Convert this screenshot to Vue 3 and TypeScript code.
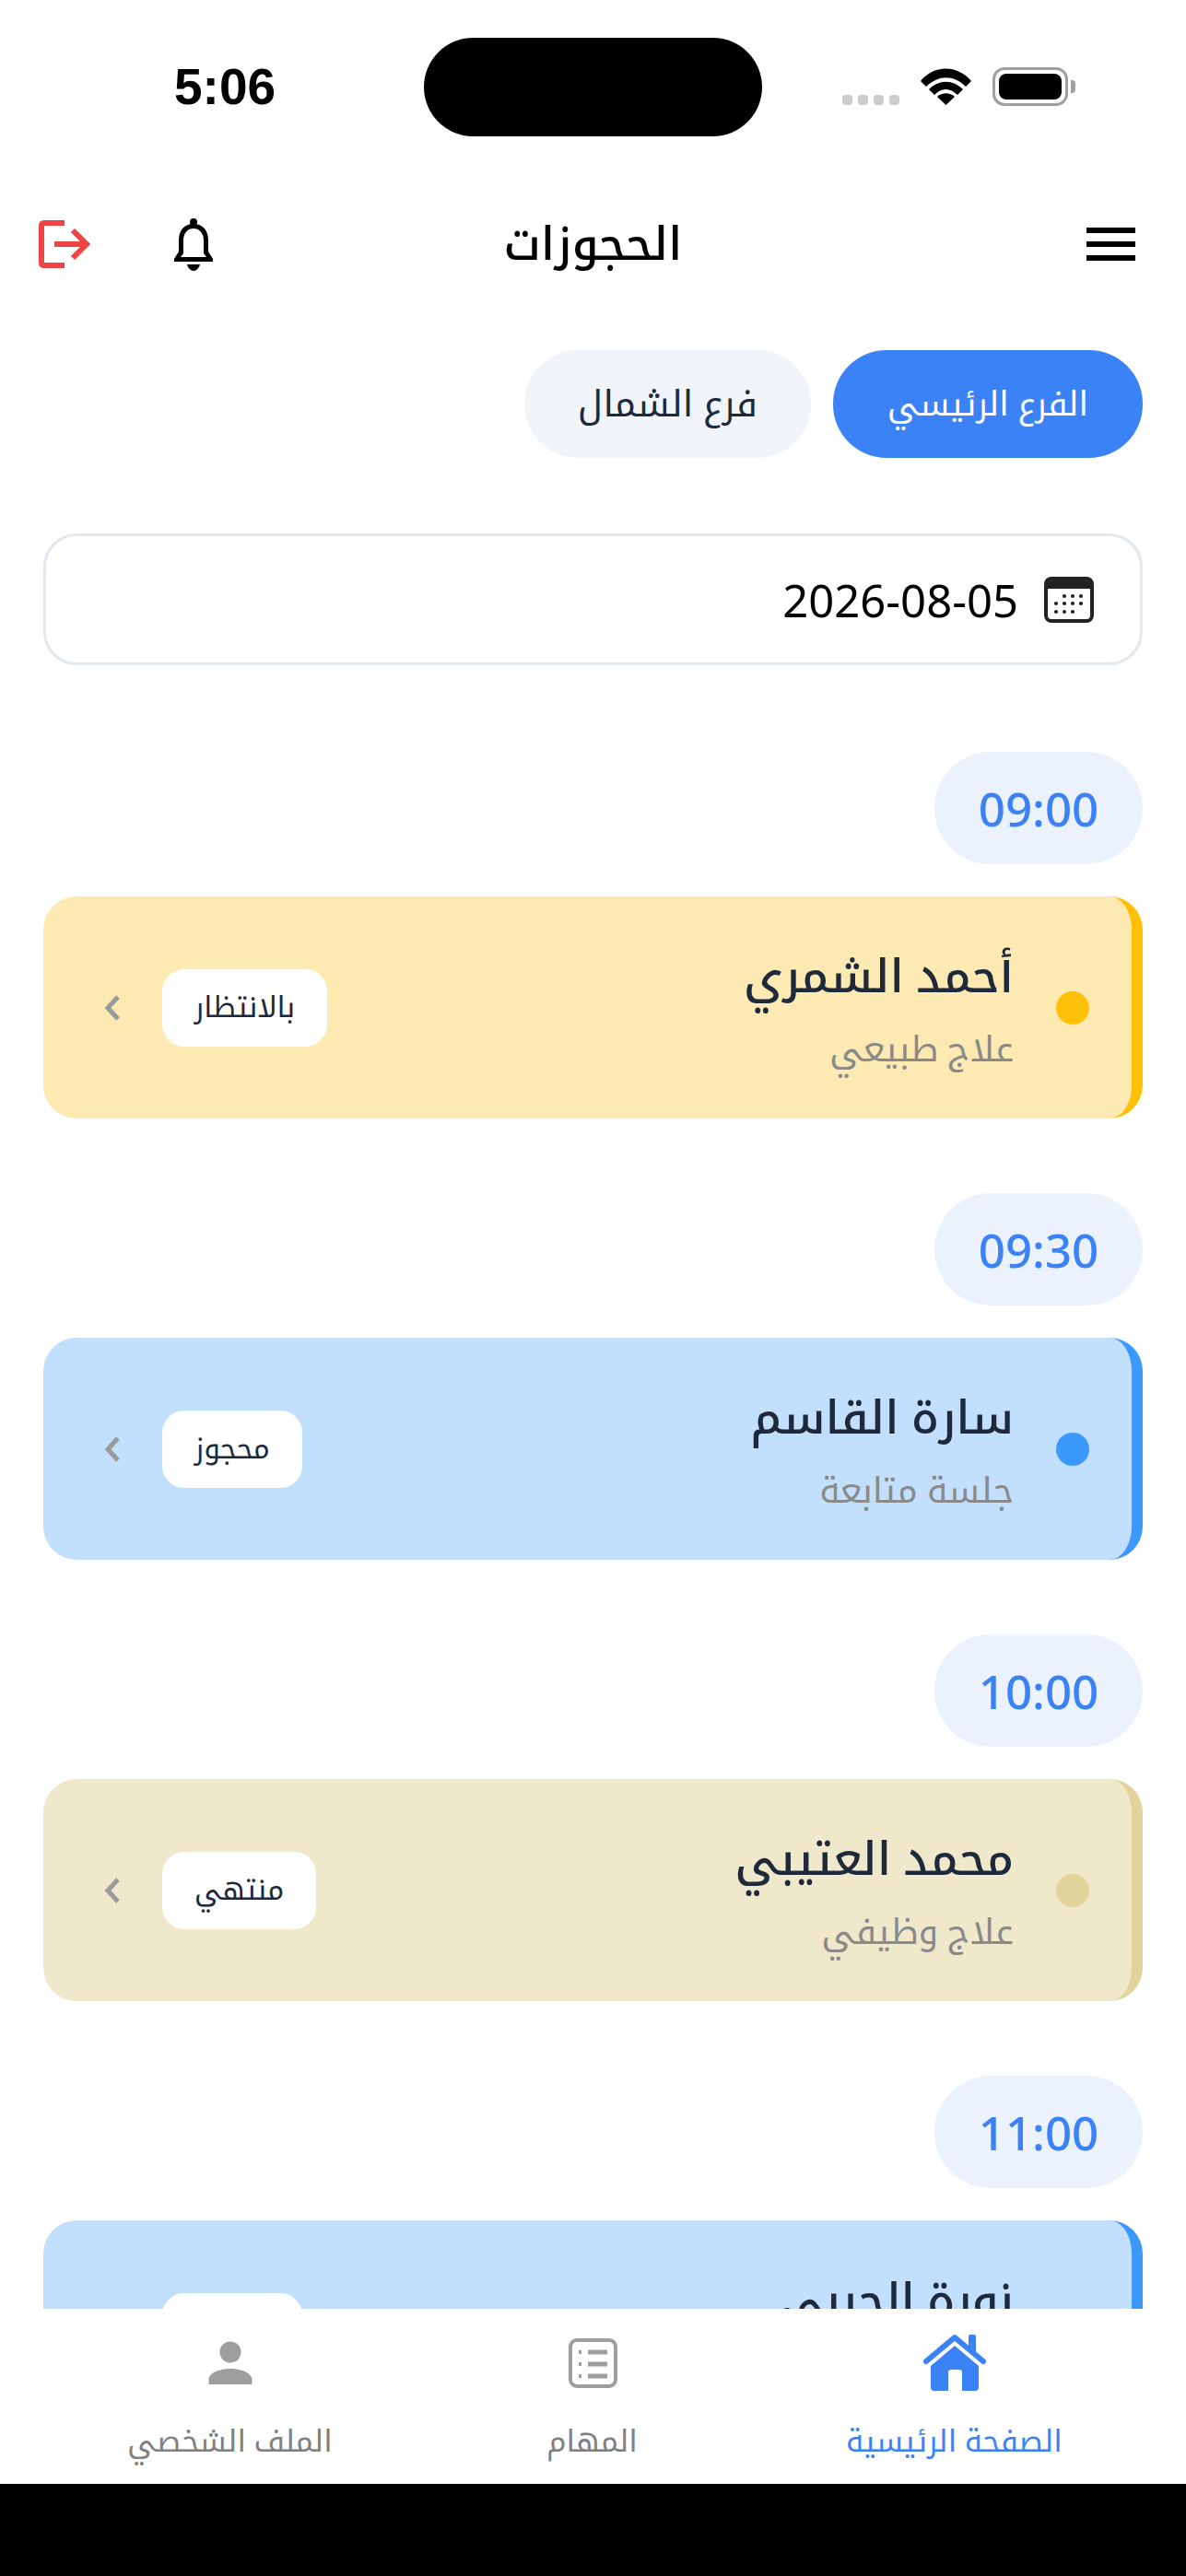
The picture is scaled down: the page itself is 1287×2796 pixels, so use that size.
<template>
  <div class="screen" dir="rtl">
    <!-- Status bar -->
    <div class="status-bar" dir="ltr">
      <span class="clock">5:06</span>
      <div class="island"></div>
      <div class="status-icons">
        <div class="signal"><i></i><i></i><i></i><i></i></div>
        <svg class="wifi" viewBox="0 0 55 40">
          <path d="M0 14 C15 -4 40 -4 55 14 L49 20 C36 7 19 7 6 20 Z" />
          <path d="M9 23 C20 12 35 12 46 23 L40 29 C32 21 23 21 15 29 Z" />
          <path d="M18 31 C24 26 31 26 37 31 L27.5 40 Z" />
        </svg>
        <div class="battery"><div class="battery-fill"></div></div>
        <div class="battery-cap"></div>
      </div>
    </div>

    <!-- Header -->
    <header class="app-header">
      <div class="menu-btn"><i></i><i></i><i></i></div>
      <h1 class="page-title">الحجوزات</h1>
      <div class="header-actions">
        <svg class="bell" viewBox="0 0 46 57">
          <circle cx="23" cy="4" r="4" />
          <path d="M23 6 C12 6 7 14 7 24 V36 L2 44 V47 H44 V44 L39 36 V24 C39 14 34 6 23 6 Z M23 11 C30 11 34 17 34 24 V38 L37 42 H9 L12 38 V24 C12 17 16 11 23 11 Z" fill-rule="evenodd" />
          <path d="M16 50 H30 C29 54 26 57 23 57 C20 57 17 54 16 50 Z" />
        </svg>
        <svg class="logout" viewBox="0 0 56 52" fill="none">
          <path d="M28 3 H6 Q3 3 3 6 V46 Q3 49 6 49 H28" stroke="#ef4444" stroke-width="6" />
          <path d="M17 26 H52 M37 11 L52 26 L37 41" stroke="#ef4444" stroke-width="6" />
        </svg>
      </div>
    </header>

    <main class="content">
      <div class="branches">
        <button
          v-for="b in branches"
          :key="b.name"
          class="branch"
          :class="{ active: b.active }"
        >
          {{ b.name }}
        </button>
      </div>

      <div class="date-field">
        <svg class="cal" viewBox="0 0 54 50">
          <rect x="0" y="0" width="54" height="50" rx="8" fill="#222" />
          <path d="M4 13 H50 V42 Q50 46 46 46 H8 Q4 46 4 42 Z" fill="#fff" />
          <g fill="#222">
            <circle v-for="(d, i) in calDots" :key="i" :cx="d[0]" :cy="d[1]" r="2.1" />
          </g>
        </svg>
        <span class="date-text">2026-08-05</span>
      </div>

      <section v-for="slot in slots" :key="slot.time" class="slot">
        <div class="time-pill">{{ slot.time }}</div>
        <div class="booking" :class="slot.kind">
          <span class="dot"></span>
          <div class="info">
            <div class="name">{{ slot.name }}</div>
            <div class="service">{{ slot.service }}</div>
          </div>
          <span class="badge">{{ slot.status }}</span>
          <svg class="chevron" viewBox="0 0 18 30" fill="none">
            <path d="M15 3 L4 15 L15 27" stroke="#9a9a9a" stroke-width="5" />
          </svg>
        </div>
      </section>
    </main>

    <!-- Bottom tabs -->
    <nav class="tabs">
      <div class="tab active">
        <svg class="tab-icon" viewBox="0 0 70 62">
          <rect x="50" y="1" width="8" height="20" rx="2" fill="#3b82f6" />
          <path d="M4 30 L35 4 L66 30" fill="none" stroke="#3b82f6" stroke-width="6" stroke-linecap="round" stroke-linejoin="round" />
          <path d="M35 13 L61 35 V58 Q61 62 57 62 H43 V42 Q43 39 40 39 H31 Q28 39 28 42 V62 H13 Q9 62 9 58 V35 Z" fill="#3b82f6" />
        </svg>
        <span>الصفحة الرئيسية</span>
      </div>
      <div class="tab">
        <svg class="tab-icon" viewBox="0 0 70 62" fill="none">
          <rect x="11" y="7" width="49" height="50" rx="7" stroke="#9e9e9e" stroke-width="4" />
          <path d="M30 20 H51 M30 33 H51 M30 46 H51" stroke="#9e9e9e" stroke-width="5" />
          <path d="M20 20 H23 M20 33 H23 M20 46 H23" stroke="#9e9e9e" stroke-width="4" />
        </svg>
        <span>المهام</span>
      </div>
      <div class="tab">
        <svg class="tab-icon" viewBox="0 0 70 62">
          <circle cx="35" cy="20" r="11.5" fill="#9e9e9e" />
          <path d="M11.5 55 V50 C11.5 42 24 38 35 38 C46 38 58.5 42 58.5 50 V55 Z" fill="#9e9e9e" />
        </svg>
        <span>الملف الشخصي</span>
      </div>
    </nav>
    <div class="home-area"></div>
  </div>
</template>

<script setup lang="ts">
interface Slot {
  time: string
  name: string
  service: string
  status: string
  kind: 'waiting' | 'booked' | 'done'
}

const branches = [
  { name: 'الفرع الرئيسي', active: true },
  { name: 'فرع الشمال', active: false }
]

const slots: Slot[] = [
  { time: '09:00', name: 'أحمد الشمري', service: 'علاج طبيعي', status: 'بالانتظار', kind: 'waiting' },
  { time: '09:30', name: 'سارة القاسم', service: 'جلسة متابعة', status: 'محجوز', kind: 'booked' },
  { time: '10:00', name: 'محمد العتيبي', service: 'علاج وظيفي', status: 'منتهي', kind: 'done' },
  { time: '11:00', name: 'نورة الحربي', service: 'جلسة تقييم', status: 'محجوز', kind: 'booked' }
]

const calDots = [
  [22, 21], [31, 21], [40, 21],
  [13, 29], [22, 29], [31, 29], [40, 29],
  [13, 38], [22, 38], [31, 38]
]
</script>

<style>
html,
body {
  margin: 0;
  background: #fff;
}
</style>

<style scoped>
.screen {
  width: 1287px;
  height: 2796px;
  display: flex;
  flex-direction: column;
  overflow: hidden;
  background: #fff;
  font-family: "Noto Sans", "Noto Kufi Arabic", "Noto Sans Arabic", "DejaVu Sans", sans-serif;
  color: #1e293b;
}

.status-bar {
  height: 190px;
  flex: none;
  position: relative;
  box-sizing: border-box;
}

.clock {
  position: absolute;
  left: 189px;
  top: 63px;
  font-family: "Liberation Sans", sans-serif;
  font-weight: 700;
  font-size: 55px;
  line-height: 62px;
  color: #000;
}

.island {
  position: absolute;
  left: 460px;
  top: 41px;
  width: 367px;
  height: 107px;
  border-radius: 54px;
  background: #000;
}

.status-icons {
  position: absolute;
  left: 914px;
  top: 73px;
  display: flex;
  align-items: center;
  height: 42px;
}

.signal {
  display: flex;
  gap: 6px;
  align-self: flex-end;
  margin-bottom: 1px;
  margin-right: 23px;
}

.signal i {
  width: 11px;
  height: 11px;
  border-radius: 4px;
  background: #ccc;
}

.wifi {
  width: 55px;
  height: 40px;
  fill: #000;
  margin-right: 23px;
}

.battery {
  width: 82px;
  height: 42px;
  box-sizing: border-box;
  border: 3px solid #a0a0a0;
  border-radius: 13px;
  padding: 4px;
}

.battery-fill {
  height: 100%;
  border-radius: 8px;
  background: #000;
}

.battery-cap {
  width: 5px;
  height: 14px;
  margin-left: 3px;
  border-radius: 0 4px 4px 0;
  background: #a0a0a0;
}

.app-header {
  height: 150px;
  flex: none;
  display: grid;
  grid-template-columns: 1fr auto 1fr;
  align-items: center;
  padding: 0 55px;
}

.menu-btn {
  display: flex;
  flex-direction: column;
  gap: 9px;
  width: 53px;
}

.menu-btn i {
  height: 6px;
  background: #000;
}

.page-title {
  margin: 0;
  font-size: 50px;
  font-weight: 500;
  color: #000;
}

.header-actions {
  display: flex;
  justify-content: flex-start;
  align-items: center;
  gap: 89px;
  justify-self: end;
  margin-left: -13px;
}

.bell {
  width: 46px;
  height: 57px;
  fill: #000;
}

.logout {
  width: 56px;
  height: 52px;
}

.content {
  flex: 1;
  min-height: 0;
  overflow: hidden;
  box-sizing: border-box;
  padding: 40px 47px 0;
}

.branches {
  display: flex;
  gap: 24px;
}

.branch {
  height: 117px;
  padding: 0 58px;
  border: none;
  border-radius: 58px;
  background: #f1f5f9;
  color: #1e293b;
  font-family: inherit;
  font-size: 40px;
}

.branch.active {
  padding: 0 59px;
  font-size: 36.5px;
  background: #3b82f6;
  color: #fff;
}

.date-field {
  height: 143px;
  margin: 82px 0 13px;
  box-sizing: border-box;
  border: 3px solid #e2e8f0;
  border-radius: 36px;
  display: flex;
  align-items: center;
  gap: 28px;
  padding: 0 50px;
}

.cal {
  width: 54px;
  height: 50px;
}

.date-text {
  font-size: 49px;
  color: #000;
}

.slot {
  padding-top: 81px;
}

.time-pill {
  width: 226px;
  height: 122px;
  border-radius: 61px;
  background: #ebf2fe;
  color: #3b82f6;
  font-size: 51px;
  font-weight: 500;
  display: flex;
  align-items: center;
  justify-content: center;
  direction: ltr;
  margin-bottom: 35px;
}

.booking {
  height: 241px;
  box-sizing: border-box;
  border-radius: 36px;
  border-right: 12px solid;
  display: flex;
  align-items: center;
  padding: 0 46px 0 66px;
}

.waiting {
  background: #fde9b2;
  border-color: #ffc107;
}

.booked {
  background: #c2dffd;
  border-color: #3b99fc;
}

.done {
  background: #f0e8cb;
  border-color: #e0d49a;
}

.dot {
  width: 36px;
  height: 36px;
  border-radius: 50%;
  flex: none;
  background: #ffc107;
}

.booked .dot {
  background: #3b99fc;
}

.done .dot {
  background: #e0d49a;
}

.info {
  flex: 1;
  margin-right: 46px;
}

.name {
  font-size: 50px;
  font-weight: 500;
  color: #1e293b;
  line-height: 72px;
}

.service {
  font-size: 38.5px;
  color: #8a8a8a;
  line-height: 58px;
  margin-top: 14px;
}

.badge {
  height: 84px;
  padding: 0 35px;
  border-radius: 24px;
  background: #fff;
  display: flex;
  align-items: center;
  font-size: 31.5px;
  color: #1e293b;
  margin-left: 45px;
}

.chevron {
  width: 18px;
  height: 30px;
  flex: none;
}

.tabs {
  height: 190px;
  flex: none;
  position: relative;
  background: #fff;
  box-sizing: border-box;
  padding: 0 55px 0 53px;
  display: grid;
  grid-template-columns: repeat(3, 1fr);
}

.tab {
  display: flex;
  flex-direction: column;
  align-items: center;
  padding-top: 27px;
  font-size: 33px;
  color: #808080;
}

.tab.active {
  color: #3b82f6;
}

.tab-icon {
  width: 70px;
  height: 62px;
}

.tab span {
  margin-top: 29px;
  line-height: 50px;
}

.home-area {
  height: 100px;
  flex: none;
  background: #000;
}
</style>
